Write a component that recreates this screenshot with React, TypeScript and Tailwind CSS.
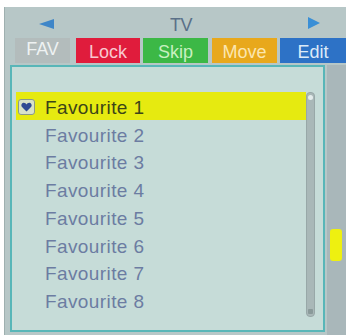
import React from "react";

const items = [
  "Favourite 1",
  "Favourite 2",
  "Favourite 3",
  "Favourite 4",
  "Favourite 5",
  "Favourite 6",
  "Favourite 7",
  "Favourite 8",
];

function HeartBox() {
  return (
    <div className="w-[17px] h-[16px] rounded-[3px] border border-[#8a9a8a] bg-[#d8e2c8] flex items-center justify-center">
      <svg width="11" height="10" viewBox="0 0 11 10">
        <path
          d="M5.5 9.5 L1 5 C-0.2 3.6 0.2 1 2.6 0.7 C3.9 0.6 4.9 1.4 5.5 2.4 C6.1 1.4 7.1 0.6 8.4 0.7 C10.8 1 11.2 3.6 10 5 Z"
          fill="#2f4a93"
        />
      </svg>
    </div>
  );
}

export default function App() {
  return (
    <div
      className="w-[346px] h-[335px] bg-white pt-[7px] pl-[4px] overflow-hidden"
      style={{ fontFamily: '"Liberation Sans", Arial, sans-serif' }}
    >
      <div className="w-full h-full bg-[#b7c7c7] border-l border-[#9fb0b0] flex flex-col">
        {/* header */}
        <div className="h-[31px] flex items-center relative">
          <div className="ml-[34px] w-0 h-0 border-y-[5px] border-y-transparent border-r-[15px] border-r-[#3f86c8] mt-[2px]" />
          <div className="flex-1 text-center text-[18px] text-[#5a7088] leading-none pt-[4px] tracking-[-0.5px]">
            TV
          </div>
          <div className="mr-[26px] w-0 h-0 border-y-[6px] border-y-transparent border-l-[12px] border-l-[#3a8fd6]" />
        </div>
        {/* tabs */}
        <div className="h-[25px] flex text-[18px] leading-none">
          <div className="ml-[10px] w-[55px] bg-[#b3bcbc] text-[#eef2f2] flex items-center justify-center pb-[4px]">
            FAV
          </div>
          <div className="ml-[6px] w-[64px] bg-[#e01c3c] text-[#f8c8d0] flex items-center justify-center pt-[3px]">
            Lock
          </div>
          <div className="ml-[3px] w-[65px] bg-[#3cb846] text-[#c8f0c0] flex items-center justify-center pt-[3px]">
            Skip
          </div>
          <div className="ml-[4px] w-[65px] bg-[#e8a81c] text-[#fbe6b0] flex items-center justify-center pt-[3px]">
            Move
          </div>
          <div className="ml-[3px] flex-1 bg-[#2d72c6] text-[#dceaf8] flex items-center justify-center pt-[3px]">
            Edit
          </div>
        </div>
        {/* content */}
        <div className="flex flex-1 pt-[2px]">
          <div className="ml-[5px] w-[315px] h-[267px] border-2 border-[#58b6b8] bg-[#c6dcd8] pt-[25px] pl-[4px] relative">
            <div className="flex">
              <div className="w-[290px] flex flex-col">
                {items.map((t, i) => (
                  <div
                    key={t}
                    className={
                      "h-[27.75px] flex items-center text-[19px] tracking-[0.4px] " +
                      (i === 0 ? "bg-[#e6ea10] text-[#3c4418]" : "text-[#6c7ca2]")
                    }
                  >
                    <div className="w-[29px] pl-[2px] pt-[2px] flex items-center">
                      {i === 0 ? <HeartBox /> : null}
                    </div>
                    <span className="leading-none pt-[3px]">{t}</span>
                  </div>
                ))}
              </div>
              <div className="w-[9px] h-[225px] rounded-[4px] bg-[#a9b8b8] border border-[#98a8a8] flex flex-col justify-between items-center py-[2px]">
                <div className="w-[5px] h-[5px] rounded-full bg-[#e4ecec]" />
                <div className="w-[5px] h-[5px] rounded-[1px] bg-[#8a9a9a]" />
              </div>
            </div>
          </div>
          <div className="ml-[2px] flex-1 h-full bg-[#a9b7ba] flex flex-col pt-[164px] pl-[3px]">
            <div className="w-[12px] h-[32px] rounded-[3px] bg-[#eef010]" />
          </div>
        </div>
      </div>
    </div>
  );
}
